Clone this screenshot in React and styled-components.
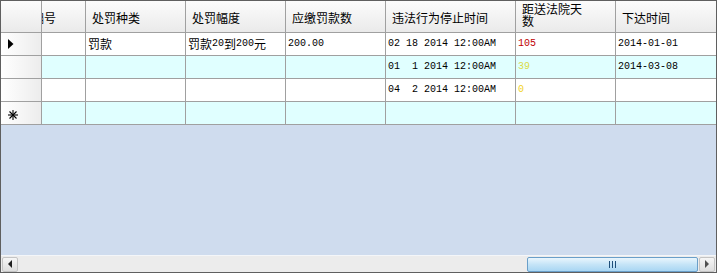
import React from "react";
import styled, { createGlobalStyle } from "styled-components";

const Global = createGlobalStyle`
  html, body { margin: 0; padding: 0; background: #ffffff; }
  body { font-family: "Noto Sans CJK SC", "Liberation Sans", sans-serif; }
`;

const Frame = styled.div`
  width: 717px;
  height: 273px;
  box-sizing: border-box;
  border: 1px solid #5f5f5f;
  display: flex;
  flex-direction: column;
  overflow: hidden;
`;

const GridArea = styled.div`
  flex: 1;
  background: #cfdcee;
  overflow: hidden;
`;

const Row = styled.div`
  display: flex;
  height: ${(p) => (p.$header ? 32 : 23)}px;
  background: ${(p) => (p.$alt ? "#e0ffff" : "#ffffff")};
`;

const Cell = styled.div`
  box-sizing: border-box;
  width: ${(p) => (p.$w ? `${p.$w}px` : "auto")};
  flex: ${(p) => (p.$w ? "none" : "1")};
  border-right: ${(p) => (p.$last ? "none" : "1px solid #a0a0a0")};
  border-bottom: 1px solid #a0a0a0;
  display: flex;
  align-items: center;
  padding-left: 2px;
  font-size: 12px;
  line-height: 14px;
  color: #000;
  white-space: nowrap;
  overflow: hidden;
`;

const HeadCell = styled(Cell)`
  background: linear-gradient(#fbfbfb, #f3f3f3 50%, #eaeaea);
  padding-left: 6px;
  white-space: normal;
  line-height: ${(p) => (p.$tight ? "12px" : "14px")};
  align-items: ${(p) => (p.$tight ? "flex-start" : "center")};
  padding-top: ${(p) => (p.$tight ? "2px" : "2px")};
`;

const RowHead = styled(Cell)`
  background: linear-gradient(90deg, #ffffff, #f4f4f4 60%, #ececec);
  padding-left: 7px;
`;

const Clipped = styled.span`
  margin-left: -16px;
`;

const Num = styled.span`
  font-family: "Liberation Mono", "DejaVu Sans Mono", monospace;
  font-size: 10px;
  color: ${(p) => p.$color || "inherit"};
  white-space: pre;
`;

const ScrollBar = styled.div`
  height: 17px;
  box-sizing: border-box;
  border-top: 1px solid #f4f6f9;
  background: #ececec;
  display: flex;
  align-items: center;
  padding: 0 1px;
`;

const ArrowBtn = styled.div`
  width: 16px;
  height: 15px;
  box-sizing: border-box;
  border: 1px solid #c4c4c4;
  border-radius: 2px;
  background: linear-gradient(#f6f6f6, #dedede);
  display: flex;
  align-items: center;
  justify-content: center;
`;

const Track = styled.div`
  flex: 1;
  height: 15px;
  display: flex;
  justify-content: flex-end;
  padding-right: 1px;
`;

const Thumb = styled.div`
  width: 171px;
  height: 15px;
  box-sizing: border-box;
  border: 1px solid #6a9fc9;
  border-radius: 2px;
  background: linear-gradient(#eaf6fd, #c5e4f7 50%, #a9d6f3);
  display: flex;
  align-items: center;
  justify-content: center;
`;

const Tri = ({ dir }) => (
  <svg width="5" height="8" viewBox="0 0 5 8">
    {dir === "left" ? (
      <polygon points="4,0 4,8 0,4" fill="#202020" />
    ) : (
      <polygon points="0,0 0,8 4,4" fill="#505050" />
    )}
  </svg>
);

const Pointer = () => (
  <svg width="6" height="10" viewBox="0 0 6 10">
    <polygon points="0,0 0,10 5.5,5" fill="#000" />
  </svg>
);

const Star = () => (
  <svg width="10" height="10" viewBox="0 0 10 10" style={{ marginTop: 3 }}>
    <g stroke="#000" strokeWidth="1.1">
      <line x1="5" y1="0" x2="5" y2="10" />
      <line x1="0" y1="5" x2="10" y2="5" />
      <line x1="1.5" y1="1.5" x2="8.5" y2="8.5" />
      <line x1="8.5" y1="1.5" x2="1.5" y2="8.5" />
    </g>
  </svg>
);

const Grip = () => (
  <svg width="7" height="7" viewBox="0 0 7 7">
    <g stroke="#1f4f7a" strokeWidth="1">
      <line x1="0.5" y1="0" x2="0.5" y2="7" />
      <line x1="3.5" y1="0" x2="3.5" y2="7" />
      <line x1="6.5" y1="0" x2="6.5" y2="7" />
    </g>
  </svg>
);

const W = [41, 44, 100, 100, 100, 130, 100];

const rows = [
  {
    mark: "ptr",
    cells: [
      "",
      "罚款",
      <>罚款<Num>20</Num>到<Num>200</Num>元</>,
      <Num>200.00</Num>,
      <Num>02 18 2014 12:00AM</Num>,
      <Num $color="#c00000">105</Num>,
      <Num>2014-01-01</Num>,
    ],
  },
  {
    alt: true,
    cells: [
      "",
      "",
      "",
      "",
      <Num>01  1 2014 12:00AM</Num>,
      <Num $color="#dcdc4a">39</Num>,
      <Num>2014-03-08</Num>,
    ],
  },
  {
    cells: ["", "", "", "", <Num>04  2 2014 12:00AM</Num>, <Num $color="#f2d21e">0</Num>, ""],
  },
  { alt: true, mark: "star", cells: ["", "", "", "", "", "", ""] },
];

export default function App() {
  return (
    <>
      <Global />
      <Frame>
        <GridArea>
          <Row $header>
            <HeadCell $w={W[0]} />
            <HeadCell $w={W[1]}>
              <Clipped>编号</Clipped>
            </HeadCell>
            <HeadCell $w={W[2]}>处罚种类</HeadCell>
            <HeadCell $w={W[3]}>处罚幅度</HeadCell>
            <HeadCell $w={W[4]}>应缴罚款数</HeadCell>
            <HeadCell $w={W[5]}>违法行为停止时间</HeadCell>
            <HeadCell $w={W[6]} $tight>
              距送法院天
              <br />
              数
            </HeadCell>
            <HeadCell $last>下达时间</HeadCell>
          </Row>
          {rows.map((r, i) => (
            <Row key={i} $alt={r.alt}>
              <RowHead $w={W[0]}>
                {r.mark === "ptr" && <Pointer />}
                {r.mark === "star" && <Star />}
              </RowHead>
              {r.cells.map((c, j) => (
                <Cell
                  key={j}
                  $w={j < 6 ? W[j + 1] : undefined}
                  $last={j === 6}
                >
                  {c}
                </Cell>
              ))}
            </Row>
          ))}
        </GridArea>
        <ScrollBar>
          <ArrowBtn>
            <Tri dir="left" />
          </ArrowBtn>
          <Track>
            <Thumb>
              <Grip />
            </Thumb>
          </Track>
          <ArrowBtn>
            <Tri dir="right" />
          </ArrowBtn>
        </ScrollBar>
      </Frame>
    </>
  );
}
